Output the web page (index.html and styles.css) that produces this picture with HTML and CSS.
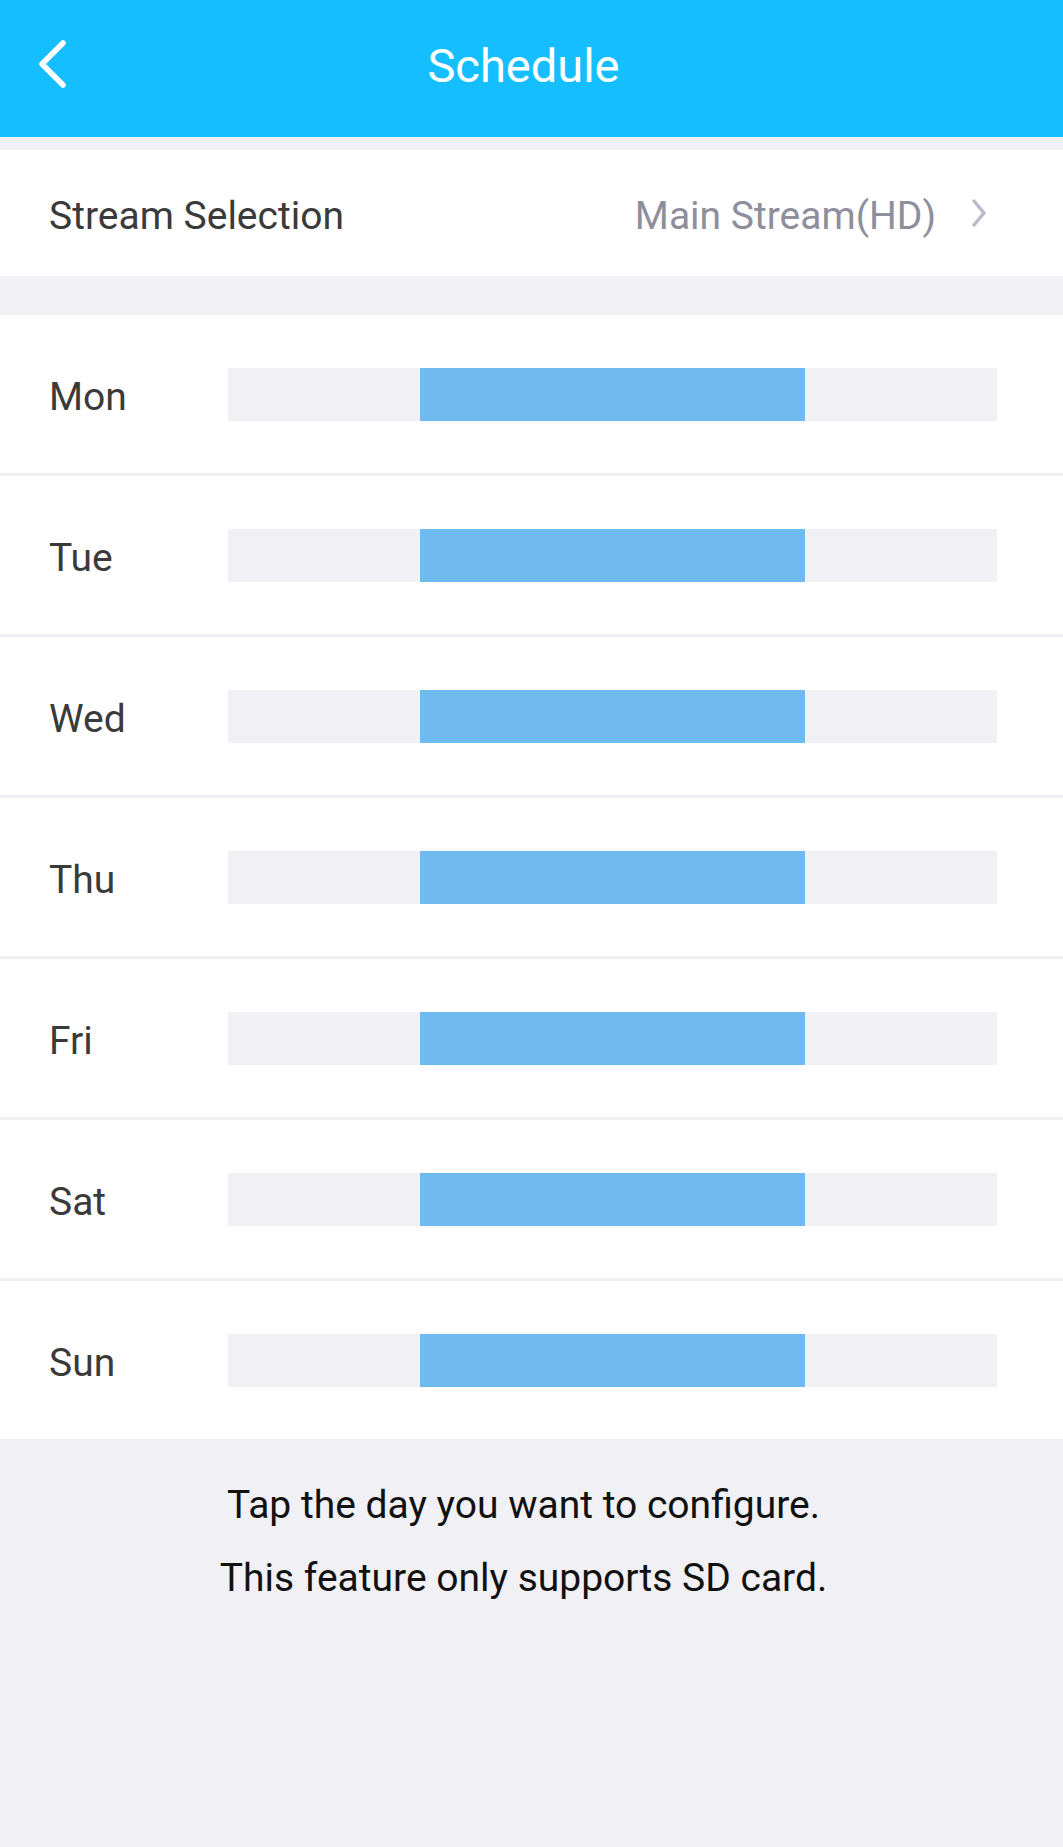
FILE: index.html
```html
<!DOCTYPE html>
<html>
<head>
<meta charset="utf-8">
<link rel="stylesheet" href="styles.css">
</head>
<body>
<div class="page">
  <header class="topbar">
    <svg class="back" width="32" height="48" viewBox="0 0 32 48"><path d="M26 3 L5 24 L26 45" fill="none" stroke="#fff" stroke-width="5.5" stroke-linecap="round" stroke-linejoin="round"/></svg>
    <div class="title">Schedule</div>
  </header>
  <div class="gap-sm"></div>
  <div class="stream-row">
    <span class="stream-label">Stream Selection</span>
    <span class="stream-value">Main Stream(HD)</span>
    <svg class="chev" width="18" height="30" viewBox="0 0 18 30"><path d="M4 3 L14 15 L4 27" fill="none" stroke="#b9b9cb" stroke-width="3.5" stroke-linecap="round" stroke-linejoin="round"/></svg>
  </div>
  <div class="gap-lg"></div>
  <div class="days">
    <div class="day"><span class="day-label">Mon</span><div class="bar"><div class="seg" style="left:25%;width:50%"></div></div></div>
    <div class="day"><span class="day-label">Tue</span><div class="bar"><div class="seg" style="left:25%;width:50%"></div></div></div>
    <div class="day"><span class="day-label">Wed</span><div class="bar"><div class="seg" style="left:25%;width:50%"></div></div></div>
    <div class="day"><span class="day-label">Thu</span><div class="bar"><div class="seg" style="left:25%;width:50%"></div></div></div>
    <div class="day"><span class="day-label">Fri</span><div class="bar"><div class="seg" style="left:25%;width:50%"></div></div></div>
    <div class="day"><span class="day-label">Sat</span><div class="bar"><div class="seg" style="left:25%;width:50%"></div></div></div>
    <div class="day"><span class="day-label">Sun</span><div class="bar"><div class="seg" style="left:25%;width:50%"></div></div></div>
  </div>
  <div class="footer">
    <p>Tap the day you want to configure.</p>
    <p>This feature only supports SD card.</p>
  </div>
</div>
</body>
</html>
```

FILE: styles.css
```css
html, body {
  margin: 0;
  padding: 0;
  background: #f0f0f5;
}
body {
  font-family: Roboto, "Liberation Sans", sans-serif;
  width: 1063px;
  min-height: 1847px;
}
.page {
  display: flex;
  flex-direction: column;
  min-height: 1847px;
  background: #f0f0f5;
}
.topbar {
  height: 137px;
  background: #15bfff;
  display: flex;
  align-items: center;
  position: relative;
  box-sizing: border-box;
  padding-bottom: 7px;
}
.back {
  position: absolute;
  left: 37px;
  top: 40px;
}
.title {
  flex: 1;
  text-align: center;
  color: #fff;
  font-size: 47px;
  padding-right: 16px;
}
.gap-sm { height: 13px; }
.gap-lg { height: 39px; }
.stream-row {
  height: 126px;
  background: #fff;
  display: flex;
  align-items: center;
  padding: 0 75px 0 49px;
  font-size: 39px;
}
.stream-label,
.stream-value {
  padding-top: 5px;
}
.stream-label {
  color: #3a3a3a;
  flex: 1;
}
.stream-value {
  color: #8e8e9c;
  margin-right: 34px;
}
.chev { display: block; }
.days {
  display: flex;
  flex-direction: column;
  gap: 3px;
}
.day {
  height: 158px;
  background: #fff;
  display: flex;
  align-items: center;
  padding: 0 66px 0 49px;
}
.day-label {
  width: 179px;
  font-size: 39px;
  color: #3a3a3a;
  padding-top: 5px;
}
.bar {
  flex: 1;
  height: 53px;
  background: #f0f0f5;
  position: relative;
}
.seg {
  position: absolute;
  top: 0;
  bottom: 0;
  background: #6fbbf0;
}
.footer {
  padding: 30px 16px 0 0;
  text-align: center;
  color: #111;
  font-size: 39px;
}
.footer p {
  margin: 0;
  line-height: 73px;
}
```
